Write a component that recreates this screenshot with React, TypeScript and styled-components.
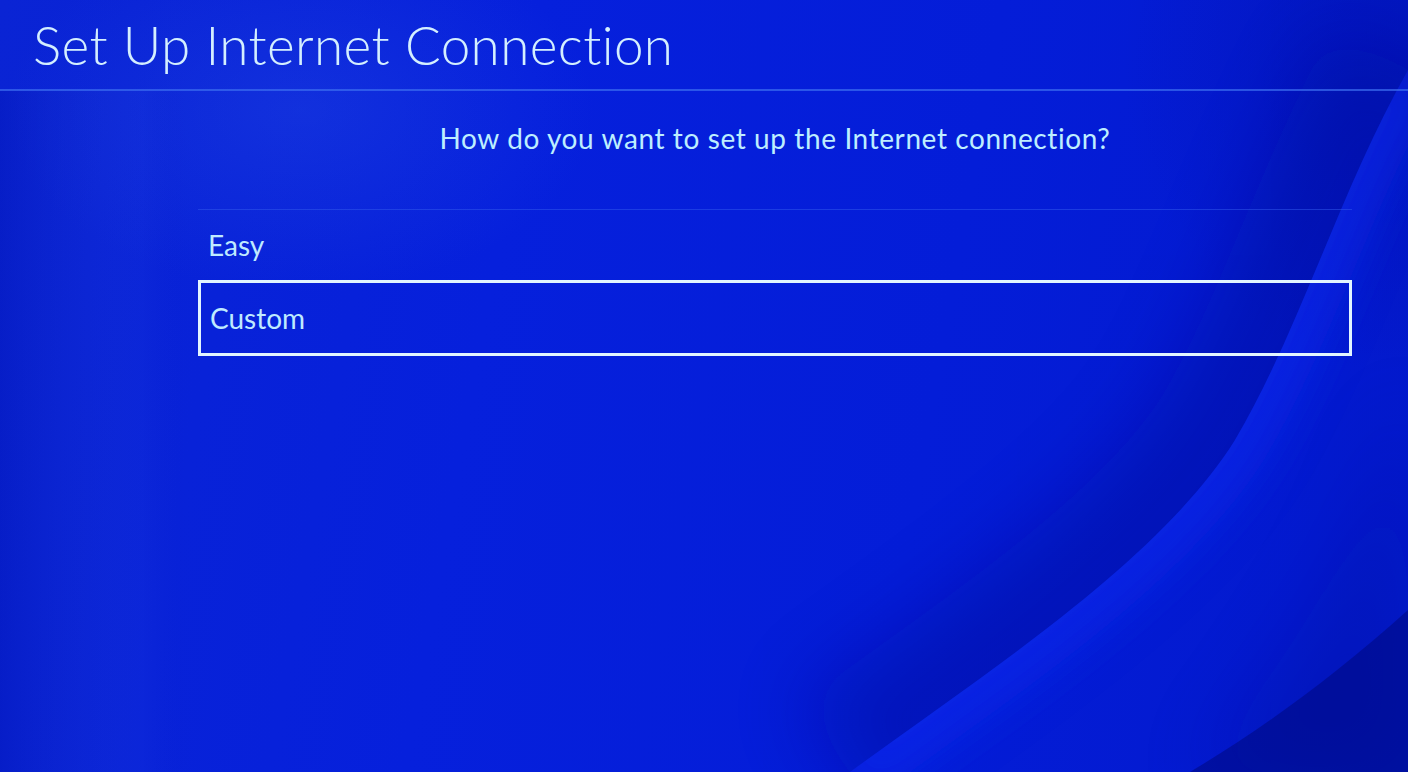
import styled, { createGlobalStyle } from 'styled-components'

const GlobalStyle = createGlobalStyle`
	html, body {
		margin: 0;
		padding: 0;
		height: 100%;
		overflow: hidden;
	}
	body {
		font-family: Lato, "Open Sans", "Liberation Sans", sans-serif;
	}
`

const Screen = styled.main`
	position: relative;
	width: 100vw;
	height: 100vh;
	overflow: hidden;
	background:
		radial-gradient(ellipse 420px 260px at 300px 110px, rgba(40, 80, 230, 0.32), transparent 70%),
		radial-gradient(ellipse 380px 420px at 1408px 60px, rgba(0, 12, 150, 0.35), transparent 75%),
		linear-gradient(100deg, #0a24d4 0%, #0620dc 35%, #041dd8 65%, #0319cc 100%);
`

const Waves = styled.svg`
	position: absolute;
	inset: 0;
	width: 100%;
	height: 100%;
	pointer-events: none;
`

const Content = styled.div`
	position: relative;
	display: flex;
	flex-direction: column;
`

const Header = styled.header`
	height: 89px;
	padding-left: 33px;
	display: flex;
	align-items: center;
	border-bottom: 2px solid rgba(60, 110, 240, 0.7);
`

const Title = styled.h1`
	margin: 0;
	font-size: 53px;
	font-weight: 300;
	color: #d4efff;
	letter-spacing: 0.4px;
`

const Body = styled.section`
	margin-left: 198px;
	width: 1154px;
	display: flex;
	flex-direction: column;
`

const Question = styled.p`
	margin: 29px 0 0;
	text-align: center;
	font-size: 28px;
	font-weight: 400;
	letter-spacing: 0.6px;
	color: #bdeeff;
	line-height: 36px;
	height: 89px;
`

const OptionList = styled.ul`
	list-style: none;
	margin: 0;
	padding: 0;
	border-top: 1px solid rgba(50, 90, 235, 0.5);
`

const Option = styled.li<{ $selected?: boolean }>`
	box-sizing: border-box;
	display: flex;
	align-items: center;
	padding-left: ${(p) => (p.$selected ? '9px' : '10px')};
	font-size: 28px;
	color: #bfeaff;
	border: ${(p) => (p.$selected ? '3px solid #e2f5ff' : 'none')};
	height: ${(p) => (p.$selected ? '76px' : '70px')};
`

const EDGE = 'M1408 70 C1340 190 1300 330 1235 440 C1160 560 990 670 850 772'
const EDGE2 = 'M1408 610 C1330 680 1260 730 1190 772'

export default function App() {
	return (
		<>
			<GlobalStyle />
			<Screen>
				<Waves viewBox="0 0 1408 772" preserveAspectRatio="none">
					<defs>
						<clipPath id="leftOfEdge">
							<path d={`${EDGE} L0 772 L0 0 L1408 0 Z`} />
						</clipPath>
						<clipPath id="rightOfEdge">
							<path d={`${EDGE} L1408 772 Z`} />
						</clipPath>
						<clipPath id="rightOfEdge2">
							<path d={`${EDGE2} L1408 772 Z`} />
						</clipPath>
						<filter id="soft" x="-30%" y="-30%" width="160%" height="160%">
							<feGaussianBlur stdDeviation="38" />
						</filter>
						<filter id="softer" x="-30%" y="-30%" width="160%" height="160%">
							<feGaussianBlur stdDeviation="22" />
						</filter>
						<linearGradient id="leftGlow" x1="0" y1="0" x2="1" y2="0">
							<stop offset="0" stopColor="#0010a8" stopOpacity="0.3" />
							<stop offset="0.75" stopColor="#2a4ae0" stopOpacity="0.1" />
							<stop offset="1" stopColor="#0414b8" stopOpacity="0" />
						</linearGradient>
					</defs>
					<rect x="0" y="90" width="190" height="682" fill="url(#leftGlow)" />
					<g clipPath="url(#leftOfEdge)">
						<path d={EDGE} fill="none" stroke="#000e9c" strokeWidth="170" opacity="0.45" filter="url(#soft)" />
					</g>
					<g clipPath="url(#rightOfEdge)">
						<path d={EDGE} fill="none" stroke="#0c2cf0" strokeWidth="70" opacity="0.55" filter="url(#softer)" />
						<path d="M1408 380 C1380 520 1300 640 1200 772 L1408 772 Z" fill="#000c98" opacity="0.3" filter="url(#soft)" />
					</g>
					<g clipPath="url(#rightOfEdge2)">
						<rect x="1150" y="580" width="300" height="220" fill="#000a80" opacity="0.55" />
					</g>
				</Waves>
				<Content>
					<Header>
						<Title>Set Up Internet Connection</Title>
					</Header>
					<Body>
						<Question>How do you want to set up the Internet connection?</Question>
						<OptionList>
							<Option>Easy</Option>
							<Option $selected>Custom</Option>
						</OptionList>
					</Body>
				</Content>
			</Screen>
		</>
	)
}
